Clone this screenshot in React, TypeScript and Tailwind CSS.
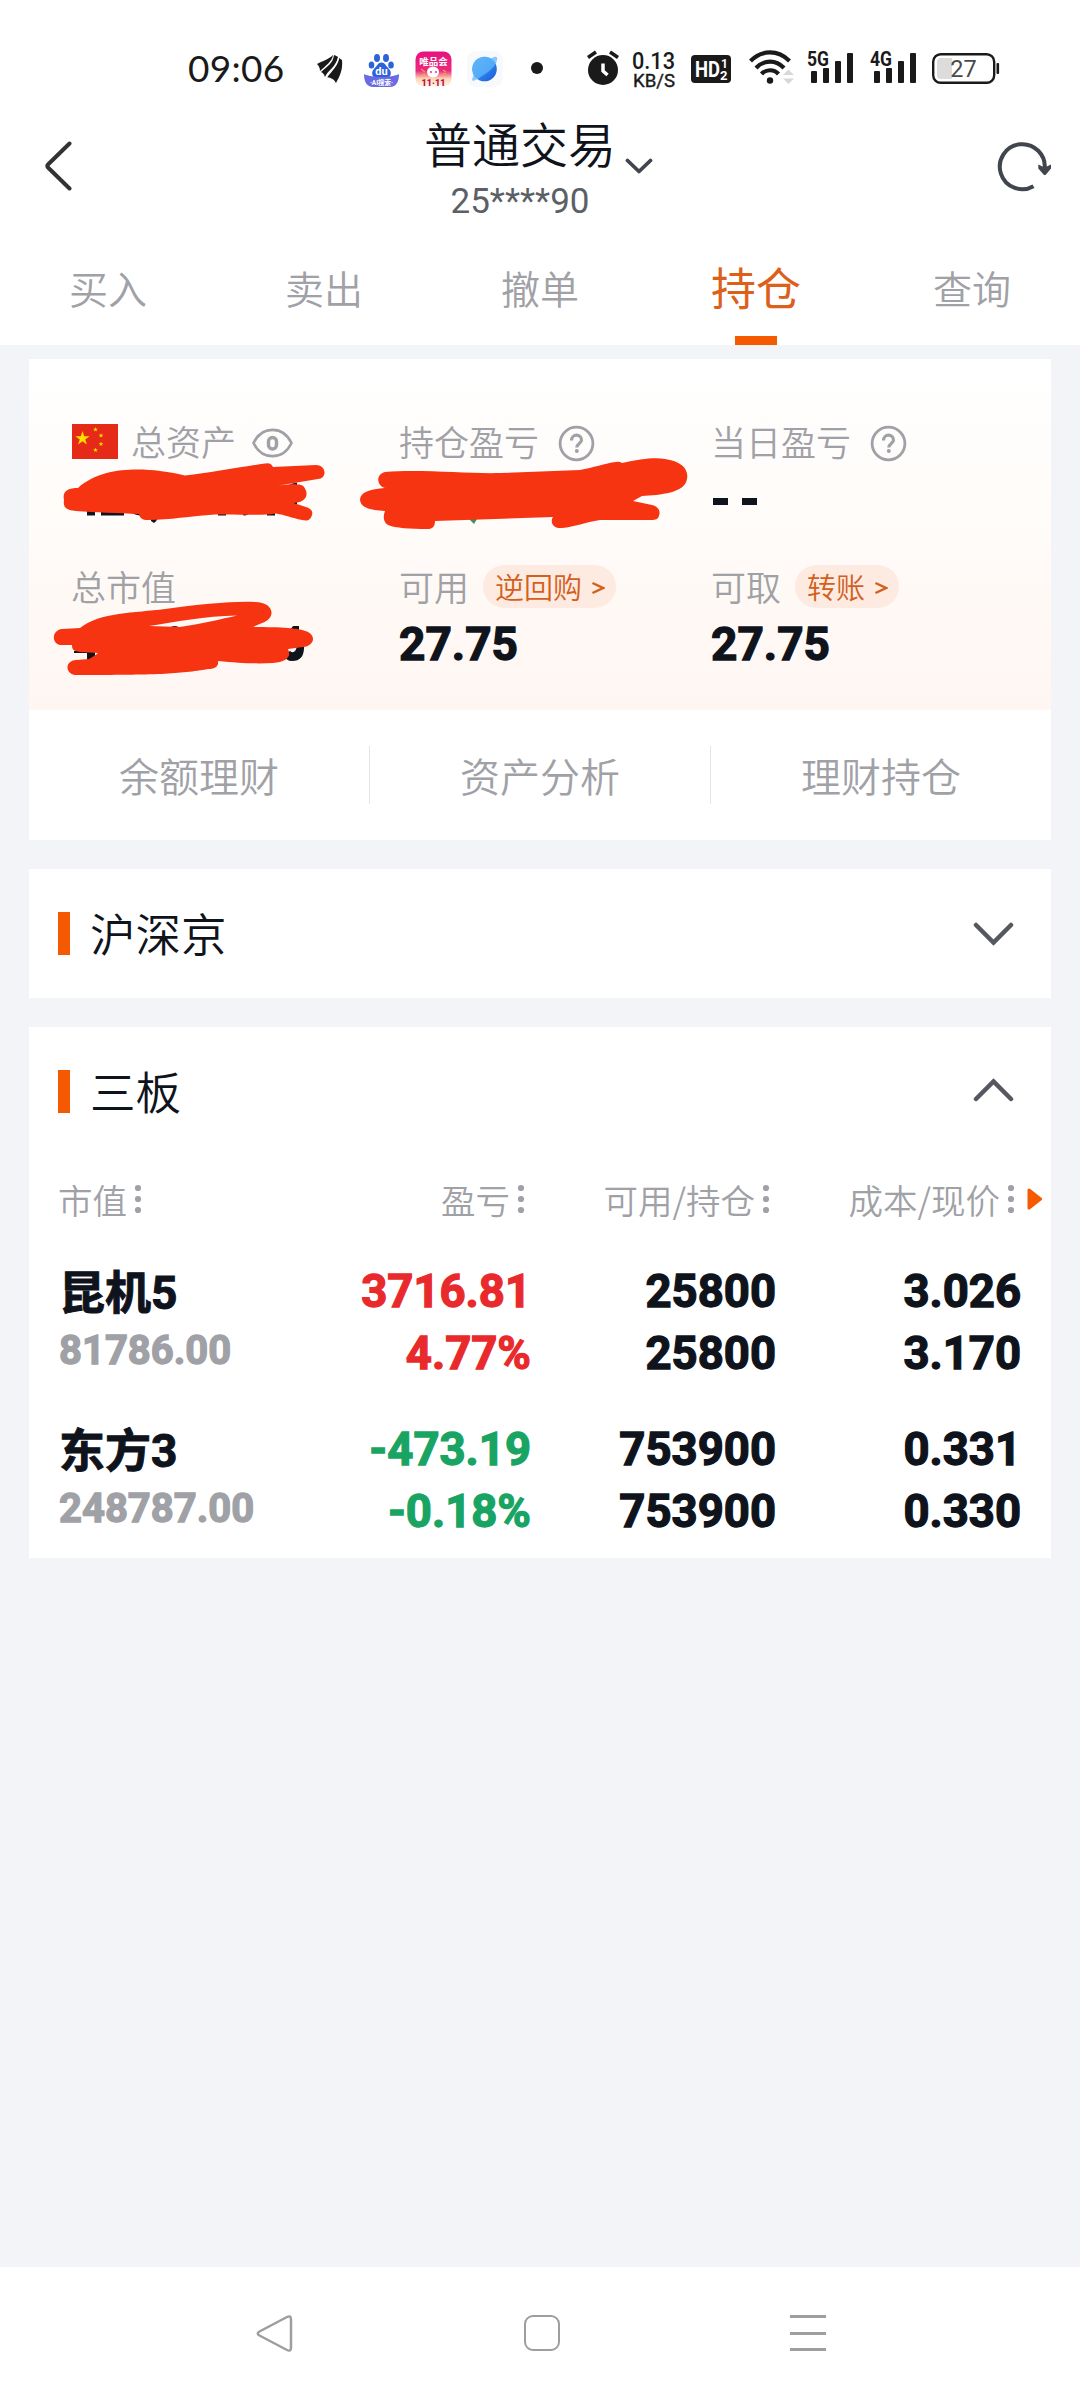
import React, { useState } from "react";

type Tone = "up" | "down";

interface Holding {
  name: string;
  marketValue: string;
  profit: string;
  rate: string;
  tone: Tone;
  available: string;
  position: string;
  cost: string;
  price: string;
}

const tabs = ["买入", "卖出", "撤单", "持仓", "查询"];

const links = ["余额理财", "资产分析", "理财持仓"];

const holdings: Holding[] = [
  {
    name: "昆机5",
    marketValue: "81786.00",
    profit: "3716.81",
    rate: "4.77%",
    tone: "up",
    available: "25800",
    position: "25800",
    cost: "3.026",
    price: "3.170",
  },
  {
    name: "东方3",
    marketValue: "248787.00",
    profit: "-473.19",
    rate: "-0.18%",
    tone: "down",
    available: "753900",
    position: "753900",
    cost: "0.331",
    price: "0.330",
  },
];

const toneClass = { up: "text-[#e92a2c]", down: "text-[#19a463]" };

const AppIcons = () => (
  <>
    <svg className="ml-[33px] mt-[54px]" width="27" height="30" viewBox="0 0 27 30">
      <path d="M1 10C6 7 12 6 17 1C16 8 9 12 4 17C4 14 3 12 1 10Z" fill="#1a1a1a" />
      <path d="M18 1C20 2 21 2 22 3C20 13 12 16 9 23C8 20 7 19 5 18C10 13 17 10 18 1Z" fill="#1a1a1a" />
      <path d="M23 4C24 5 25 5 26 6C27 15 24 22 20 29C18 25 15 24 11 23C13 17 22 13 23 4Z" fill="#1a1a1a" />
      <path d="M22.500 4C21 14 14 17 10 24" fill="none" stroke="#fff" strokeWidth="1.200" />
    </svg>
    <svg className="ml-[20px] mt-[53px]" width="37" height="35" viewBox="0 0 37 35">
      <g fill="#2d62d8">
        <ellipse cx="14" cy="5" rx="3" ry="4" />
        <ellipse cx="23" cy="5" rx="3" ry="4" />
        <ellipse cx="8.500" cy="12" rx="2.800" ry="3.600" />
        <ellipse cx="28" cy="12" rx="2.800" ry="3.600" />
        <path d="M18.500 9.500C22 9.500 23 13 26 16C30 20 27 26 22 25.500H15C10 26 7 20 11 16C14 13 15 9.500 18.500 9.500Z" />
      </g>
      <path d="M1 21C8 25 29 25 36 21C36 29 33 34 27 34H10C4 34 1 29 1 21Z" fill="#6a6be0" />
      <text x="18.500" y="22" textAnchor="middle" fontSize="11" fontWeight="700" fill="#fff" fontFamily="Roboto, sans-serif">du</text>
      <text x="18.500" y="32" textAnchor="middle" fontSize="6.500" fontWeight="700" fill="#fff" fontFamily="Roboto, 'Noto Sans CJK SC', sans-serif">·AI搜索·</text>
    </svg>
    <svg className="ml-[15px] mt-[51px]" width="37" height="36" viewBox="0 0 37 36">
      <defs>
        <linearGradient id="vip" x1="0" y1="0" x2="0" y2="1">
          <stop offset="0" stopColor="#e8117f" />
          <stop offset=".55" stopColor="#ea2a7c" />
          <stop offset=".78" stopColor="#fbd9b4" />
          <stop offset="1" stopColor="#fff3ea" />
        </linearGradient>
      </defs>
      <rect x=".5" y=".5" width="36" height="35" rx="8" fill="url(#vip)" />
      <text x="18.500" y="13.500" textAnchor="middle" fontSize="9.500" fontWeight="700" fill="#fff" fontFamily="'Noto Sans CJK SC', sans-serif">唯品会</text>
      <ellipse cx="18" cy="21" rx="6" ry="5.500" fill="#fff" />
      <path d="M6 18l4 3M7 24l3-1M28 19l3 2M28 23l3 0" stroke="#f3a13c" strokeWidth="1.500" />
      <circle cx="16" cy="21" r=".9" fill="#d2256e" />
      <circle cx="21" cy="21" r=".9" fill="#d2256e" />
      <text x="18.500" y="34.500" textAnchor="middle" fontSize="9" fontWeight="900" fill="#c3103f" fontFamily="Roboto, sans-serif">11·11</text>
    </svg>
    <svg className="ml-[15px] mt-[51px]" width="36" height="36" viewBox="0 0 36 36">
      <defs>
        <linearGradient id="globe" x1="0" y1="0" x2="1" y2="1">
          <stop offset="0" stopColor="#57b4f7" />
          <stop offset=".5" stopColor="#2f86ef" />
          <stop offset="1" stopColor="#1b55d8" />
        </linearGradient>
      </defs>
      <rect width="36" height="36" rx="9" fill="#f8f9fc" />
      <circle cx="17.500" cy="18" r="12.300" fill="url(#globe)" />
      <path d="M5 29C6 25 7 23 7 24A12.300 12.300 0 0 1 24 7.500C28 5 31 5 30 9C29 15 22 21 15 25C11 28 6 31 5 29Z" fill="#62b8fa" opacity=".75" />
    </svg>
    <span className="ml-[28px] mt-[62px] h-3 w-3 rounded-full bg-[#1a1a1a]" />
  </>
);

const Signal = ({ label }: { label: string }) => (
  <svg className="overflow-visible" width="47" height="35" viewBox="0 0 47 35">
    <g fill="#1a1a1a">
      <text x="0" y="16" fontSize="20.500" fontWeight="700" fontFamily="Roboto, sans-serif" textLength="22" lengthAdjust="spacingAndGlyphs">{label}</text>
      <rect x="4" y="21" width="6" height="12" rx="1" />
      <rect x="16" y="18" width="6" height="15" rx="1" />
      <rect x="28" y="11" width="6" height="22" rx="1" />
      <rect x="40" y="3" width="6" height="30" rx="1" />
    </g>
  </svg>
);

const StatusBar = () => (
  <div className="flex h-[110px] items-start">
    <span className="ml-[188px] mt-[50px] w-[95px] font-['Lato'] text-[37px] leading-9 font-normal tracking-[0.3px] text-[#1a1a1a]">09:06</span>
    <AppIcons />
    <svg className="ml-[43px] mt-[50px]" width="34" height="36" viewBox="0 0 34 36">
      <circle cx="17" cy="20" r="15" fill="#1a1a1a" />
      <path d="M2 7.500L10 2M32 7.500L24 2" stroke="#1a1a1a" strokeWidth="3.500" />
      <path d="M17 13.500V21L21.500 25" fill="none" stroke="#fff" strokeWidth="3.500" />
    </svg>
    <svg className="ml-[12px] mt-[50px] overflow-visible" width="44" height="39" viewBox="0 0 44 39">
      <g fill="#1a1a1a" fontFamily="Roboto, sans-serif" fontWeight="500">
        <text x="0" y="19" fontSize="24" textLength="43" lengthAdjust="spacingAndGlyphs">0.13</text>
        <text x="1" y="36.500" fontSize="19" fontWeight="400" stroke="#1a1a1a" strokeWidth=".4" textLength="42" lengthAdjust="spacingAndGlyphs">KB/S</text>
      </g>
    </svg>
    <svg className="ml-[15px] mt-[55px] overflow-visible" width="40" height="28" viewBox="0 0 40 28">
      <rect width="40" height="28" rx="4" fill="#1a1a1a" />
      <g fill="#fff" fontFamily="Roboto, sans-serif" fontWeight="700">
        <text x="4" y="22" fontSize="22" textLength="25" lengthAdjust="spacingAndGlyphs">HD</text>
        <text x="30" y="13" fontSize="12">1</text>
        <text x="29" y="25" fontSize="13">2</text>
      </g>
    </svg>
    <svg className="ml-[17px] mt-[49px]" width="46" height="36" viewBox="0 0 46 36">
      <g fill="none" stroke="#1a1a1a" strokeWidth="4.200">
        <path d="M2.500 12C14 .6 30 .6 41.500 12" />
        <path d="M8 19C16 10.500 28 10.500 36 19" />
        <path d="M13.500 25C18 20 26 20 30.500 25" />
      </g>
      <circle cx="22" cy="31.500" r="3.200" fill="#1a1a1a" />
      <path d="M35 26L40.500 20.500L46 26ZM35 29.500H46L40.500 35Z" fill="#d8d8d8" />
    </svg>
    <div className="ml-[13px] mt-[50px]">
      <Signal label="5G" />
    </div>
    <div className="ml-[16px] mt-[50px]">
      <Signal label="4G" />
    </div>
    <svg className="ml-[15px] mt-[53px] overflow-visible" width="68" height="32" viewBox="0 0 68 32">
      <rect x="1.200" y="1.200" width="61" height="28.600" rx="7.500" fill="none" stroke="#1a1a1a" strokeWidth="2.400" />
      <path d="M9 5H20V26H9Q5 26 5 22V9Q5 5 9 5Z" fill="#dcdcdc" />
      <rect x="64.500" y="10" width="2.600" height="11" rx="1" fill="#1a1a1a" />
      <text x="31.500" y="24" textAnchor="middle" fontSize="23.500" fill="#4a4a4a" fontFamily="Roboto, sans-serif" fontWeight="400">27</text>
    </svg>
  </div>
);

const Header = () => (
  <div className="flex h-[130px]">
    <svg className="ml-[44px] mt-[31px]" width="28" height="50" viewBox="0 0 28 50">
      <path d="M25.500 2.500L4 23.500Q2.500 25 4 26.500L25.500 47.500" fill="none" stroke="#333" strokeWidth="4" strokeLinecap="round" />
    </svg>
    <div className="ml-[352px] flex flex-col items-center">
      <div className="relative mt-[6px] text-[48px] leading-[52px] text-[#0f131c]">
        普通交易
        <svg className="absolute top-[42px] left-[201px]" width="28" height="17" viewBox="0 0 28 17">
          <path d="M2.500 2.500L14 13.500L25.500 2.500" fill="none" stroke="#41454d" strokeWidth="3.800" strokeLinecap="round" strokeLinejoin="round" />
        </svg>
      </div>
      <p className="mt-[13px] font-['Roboto'] text-[35px] leading-[42px] font-normal text-[#5c5f66]">25****90</p>
    </div>
    <svg className="mr-[28px] mt-[30px] ml-auto" width="56" height="52" viewBox="0 0 56 52">
      <path d="M37.500 46.200A22.500 22.500 0 1 1 48.700 29" fill="none" stroke="#41454d" strokeWidth="4" />
      <path d="M42.300 24.500L48.700 27.500L55 24.500V28.500L50 34.500Q48.700 35.500 47.500 34.500L42.300 28.500Z" fill="#41454d" />
    </svg>
  </div>
);

const Flag = () => {
  const star = "M0-1L.2245-.309L.951-.309L.363.118L.588.809L0 .382L-.588.809L-.363.118L-.951-.309L-.2245-.309Z";
  return (
    <svg className="mr-[13px] ml-[1px]" width="46" height="35" viewBox="0 0 46 35">
      <rect width="46" height="35" fill="#e52a18" />
      <g fill="#ffe100">
        <path d={star} transform="translate(10.500 14.500) scale(7.500)" />
        <path d={star} transform="translate(23.500 5.500) scale(2.600)" />
        <path d={star} transform="translate(29 11.500) scale(2.600)" />
        <path d={star} transform="translate(29 20) scale(2.600)" />
        <path d={star} transform="translate(23.500 26) scale(2.600)" />
      </g>
    </svg>
  );
};

const Help = () => (
  <svg className="mt-[4px] ml-[19px]" width="37" height="37" viewBox="0 0 37 37" fill="none" stroke="#9fa1a6">
    <circle cx="18.500" cy="18.500" r="16.400" strokeWidth="2.800" />
    <path d="M13.500 15.500C13.500 8.500 23.500 8.500 23.500 15C23.500 18.500 18.800 18.500 18.800 22.500" strokeWidth="3.200" />
    <circle cx="18.800" cy="26" r="2" fill="#9fa1a6" stroke="none" />
  </svg>
);

const Pill = ({ children }: { children: React.ReactNode }) => (
  <span className="mt-[1px] flex h-[43px] items-center rounded-full bg-[#fdeae1] pr-[11px] pl-[12px] text-[29px] leading-[43px] text-[#d35f1c]">
    {children}
    <svg className="mt-[4px] ml-[9px]" width="14" height="16" viewBox="0 0 14 16">
      <path d="M1.500 3L12 8L1.500 13" fill="none" stroke="#d35f1c" strokeWidth="2.400" />
    </svg>
  </span>
);

const Amount = ({ children }: { children: React.ReactNode }) => (
  <p className="mt-[9px] font-['Roboto'] text-[46px] leading-[56px] font-bold text-[#0f131c] [-webkit-text-stroke:1.3px]">{children}</p>
);

// Hand drawn marker strokes over the hidden amounts
const Scribbles = () => (
  <svg className="absolute top-0 left-0" width="1022" height="351" viewBox="29 359 1022 351">
    <g fill="#0f131c">
      <path d="M87 508H95V515.500H87ZM101 508H124V515.500H101ZM130 510H140V515.500Q134 515 130 511ZM151 516H158Q158 520 154 523L151 521ZM218 511H226V515.500H218ZM243 512H250Q246 517 243 515ZM267 511H275V515.500H267ZM288 484.500L297 482.500V485ZM290 502L297 499.500V505Z" />
      <path d="M74 651H95V660H87V653H74ZM169 628Q175 624 180 628ZM290 630L293 626H299V631ZM304 645Q305 661 292 661Q286 661 284 655L290 651Q295 655 297 646Z" />
    </g>
    <path d="M469 519H477L474 524Z" fill="#32955a" />
    <g fill="#f63411">
      <path d="M78 488C100 468 135 468 160 471C170 472 178 474 185 475.500C210 473 240 467 265 463.500Q271 462 273 467L316 465C327 465 327 479 318 479L276 486C290 484 302 483 304 487C310 495 305 503 293 503C306 507 314 508 312 515C310 521 307 521 302 520C292 518 285 515 276 513.500C262 516 240 514 215 514.500C190 516 170 520 148 520C142 520 140 518 139 514C118 513 95 512.500 76 511C66 510 63 508 64 500C62 491 68 488 78 488Z" />
      <path fillRule="evenodd" d="M80 628C100 612 135 613 165 609C200 604 235 601 255 602C274 602 277 618 262 623L253 627C280 627 300 628 308 632C317 637 313 646 303 647L288 649C292 657 286 662 273 663C255 664 240 663 218 661C219 667 214 669 208 669C180 674 155 675 77 675C65 675 64 661 76 660L89 659C94 656 97 654 98 653L80 652C73 651 72 649 72 645L60 645C51 643 52 630 62 629ZM149 626L180 627C200 624 222 619 237 615.500C205 616 175 622 149 626Z" />
      <path d="M385 472C420 469 470 474 500 473L580 470C593 468 605 463 616 462Q619 461 622 463C640 459 655 457 665 459C681 461 689 469 687 479C685 493 660 495 642 496L633 501L652 505C660 507 661 513 658 518C656 520 653 520 650 520H600C585 522 575 527 562 528C552 529 550 521 553 517L435 521C435 527 432 529 428 529C410 529 395 528 388 525C383 522 383 516 385 511C370 510 361 508 360 500C360 492 370 489 385 488C376 485 376 474 385 472Z" />
    </g>
  </svg>
);

const Summary = () => (
  <section className="h-[481px] bg-white">
    <div className="relative h-[351px] bg-linear-to-b from-white via-[#fffbf8] to-[#fff6f2] pt-[61px] pl-[42px] text-[35px] leading-[40px] text-[#9fa1a6]">
      <div className="flex">
        <div className="w-[328px]">
          <div className="flex h-[42px] items-center">
            <Flag />
            总资产
            <svg className="mt-[4px] ml-[16px]" width="41" height="30" viewBox="0 0 41 30" fill="none" stroke="#9fa1a6">
              <path d="M1.500 15C10-2.500 31-2.500 39.500 15C31 32.500 10 32.500 1.500 15Z" strokeWidth="2.600" />
              <rect x="16.500" y="9.500" width="8" height="11.500" rx="4" strokeWidth="3.400" />
            </svg>
          </div>
        </div>
        <div className="w-[312px]">
          <div className="flex h-[42px] items-center">
            持仓盈亏
            <Help />
          </div>
        </div>
        <div>
          <div className="flex h-[42px] items-center">
            当日盈亏
            <Help />
          </div>
          <div className="mt-[36px] flex gap-[14px] pl-[2px]">
            <i className="h-[7px] w-[15px] bg-[#0f131c]" />
            <i className="h-[7px] w-[15px] bg-[#0f131c]" />
          </div>
        </div>
      </div>
      <div className="mt-[59px] flex">
        <div className="w-[328px]">
          <div className="flex h-[43px] items-center">总市值</div>
        </div>
        <div className="w-[312px]">
          <div className="flex h-[43px] items-center gap-[14px]">
            可用
            <Pill>逆回购</Pill>
          </div>
          <Amount>27.75</Amount>
        </div>
        <div>
          <div className="flex h-[43px] items-center gap-[14px]">
            可取
            <Pill>转账</Pill>
          </div>
          <Amount>27.75</Amount>
        </div>
      </div>
      <Scribbles />
    </div>
    <div className="flex h-[130px] items-center">
      {links.map((link, index) => (
        <div
          key={link}
          className={`${index > 0 ? "border-l border-[#e3e4e8]" : ""} flex h-[58px] flex-1 items-center justify-center text-[40px] leading-[40px] text-[#9fa1a6]`}
        >
          {link}
        </div>
      ))}
    </div>
  </section>
);

const SectionTitle = ({ title, open, onClick }: { title: string; open: boolean; onClick: () => void }) => (
  <div onClick={onClick} className="flex h-[129px] cursor-pointer items-center pr-[37px] pl-[29px]">
    <span className="h-[43px] w-[12px] bg-[#f65a00]" />
    <h2 className="mb-[3px] ml-[20px] flex-1 text-[45.500px] leading-[48px] font-[350] text-[#0f131c]">{title}</h2>
    <svg className={open ? "mb-[4px] rotate-180" : "mt-[1px]"} width="41" height="25" viewBox="0 0 41 25">
      <path d="M3 3L20.500 20.500L38 3" fill="none" stroke="#55585f" strokeWidth="4.500" strokeLinecap="round" />
    </svg>
  </div>
);

const ColumnHead = ({ label }: { label: string }) => (
  <span className="flex items-center justify-end">
    {label}
    <svg className="ml-[7px]" width="8" height="30" viewBox="0 0 8 30" fill="#9fa1a6">
      <circle cx="4" cy="4" r="3.100" />
      <circle cx="4" cy="15" r="3.100" />
      <circle cx="4" cy="26" r="3.100" />
    </svg>
  </span>
);

const HoldingRow = ({ item }: { item: Holding }) => (
  <div className="flex h-[158px] pl-[29px] font-['Roboto'] text-[45.500px] leading-[62px] font-bold text-[#0f131c] [-webkit-text-stroke:1.3px]">
    <div className="w-[213px] pl-[1px]">
      <p className="mt-[1px] font-['Roboto','Noto_Sans_CJK_SC'] text-[46px] [-webkit-text-stroke:1px]">{item.name}</p>
      <p className="mt-[-4px] text-[40px] text-[#9fa1a6]">{item.marketValue}</p>
    </div>
    <div className={`${toneClass[item.tone]} w-[260px] text-right`}>
      <p>{item.profit}</p>
      <p>{item.rate}</p>
    </div>
    <div className="w-[245px] text-right">
      <p>{item.available}</p>
      <p>{item.position}</p>
    </div>
    <div className="w-[245px] text-right">
      <p>{item.cost}</p>
      <p>{item.price}</p>
    </div>
  </div>
);

const NavBar = () => (
  <nav className="flex h-[133px] items-start bg-white pt-[48px]">
    <svg className="ml-[256px]" width="37" height="37" viewBox="0 0 37 37">
      <path d="M31 2Q35 0 35 4.500V32.500Q35 37 31 35L3.500 20.500Q0 18.500 3.500 16.500Z" fill="none" stroke="#9e9e9e" strokeWidth="2.500" />
    </svg>
    <span className="ml-[231px] h-[36px] w-[36px] rounded-[9px] border-[2.500px] border-[#9e9e9e]" />
    <div className="ml-[230px] flex h-[36px] w-[36px] flex-col justify-between">
      <i className="h-[3px] bg-[#9e9e9e]" />
      <i className="h-[3px] bg-[#9e9e9e]" />
      <i className="h-[3px] bg-[#9e9e9e]" />
    </div>
  </nav>
);

const App = () => {
  const [activeTab, setActiveTab] = useState("持仓");
  const [mainOpen, setMainOpen] = useState(false);
  const [thirdOpen, setThirdOpen] = useState(true);

  return (
    <div className="flex h-[2400px] w-[1080px] flex-col overflow-hidden bg-[#f2f4f8] font-['Noto_Sans_CJK_SC',sans-serif] font-[350]">
      <div className="h-[345px] bg-white">
        <StatusBar />
        <Header />
        <div className="flex h-[105px]">
          {tabs.map((tab) => (
            <button
              key={tab}
              onClick={() => setActiveTab(tab)}
              className={`${
                tab === activeTab ? "pt-[17px] text-[45px] font-normal text-[#dd601a]" : "pt-[17px] text-[39px] text-[#9fa1a6]"
              } flex flex-1 flex-col items-center justify-between leading-[60px]`}
            >
              {tab}
              {tab === activeTab && <span className="h-[9px] w-[42px] bg-[#f65a00]" />}
            </button>
          ))}
        </div>
      </div>

      <main className="flex-1 px-[29px] pt-[14px]">
        <Summary />
        <section className="mt-[29px] bg-white">
          <SectionTitle title="沪深京" open={mainOpen} onClick={() => setMainOpen(!mainOpen)} />
        </section>
        <section className="mt-[29px] h-[531px] bg-white">
          <SectionTitle title="三板" open={thirdOpen} onClick={() => setThirdOpen(!thirdOpen)} />
          {thirdOpen && (
            <>
              <div className="flex h-[86px] items-center pl-[29px] text-[34.5px] leading-[40px] text-[#9fa1a6]">
                <div className="flex w-[213px]">
                  <ColumnHead label="市值" />
                </div>
                <div className="w-[254px]">
                  <ColumnHead label="盈亏" />
                </div>
                <div className="w-[245px]">
                  <ColumnHead label="可用/持仓" />
                </div>
                <div className="w-[245px]">
                  <ColumnHead label="成本/现价" />
                </div>
                <svg className="ml-[12px]" width="16" height="22" viewBox="0 0 16 22">
                  <path d="M2 2L13.500 11L2 20Z" fill="#f65a00" stroke="#f65a00" strokeWidth="3" strokeLinejoin="round" />
                </svg>
              </div>
              <div className="pt-[19px]">
                {holdings.map((item) => (
                  <HoldingRow key={item.name} item={item} />
                ))}
              </div>
            </>
          )}
        </section>
      </main>

      <NavBar />
    </div>
  );
};

export default App;
